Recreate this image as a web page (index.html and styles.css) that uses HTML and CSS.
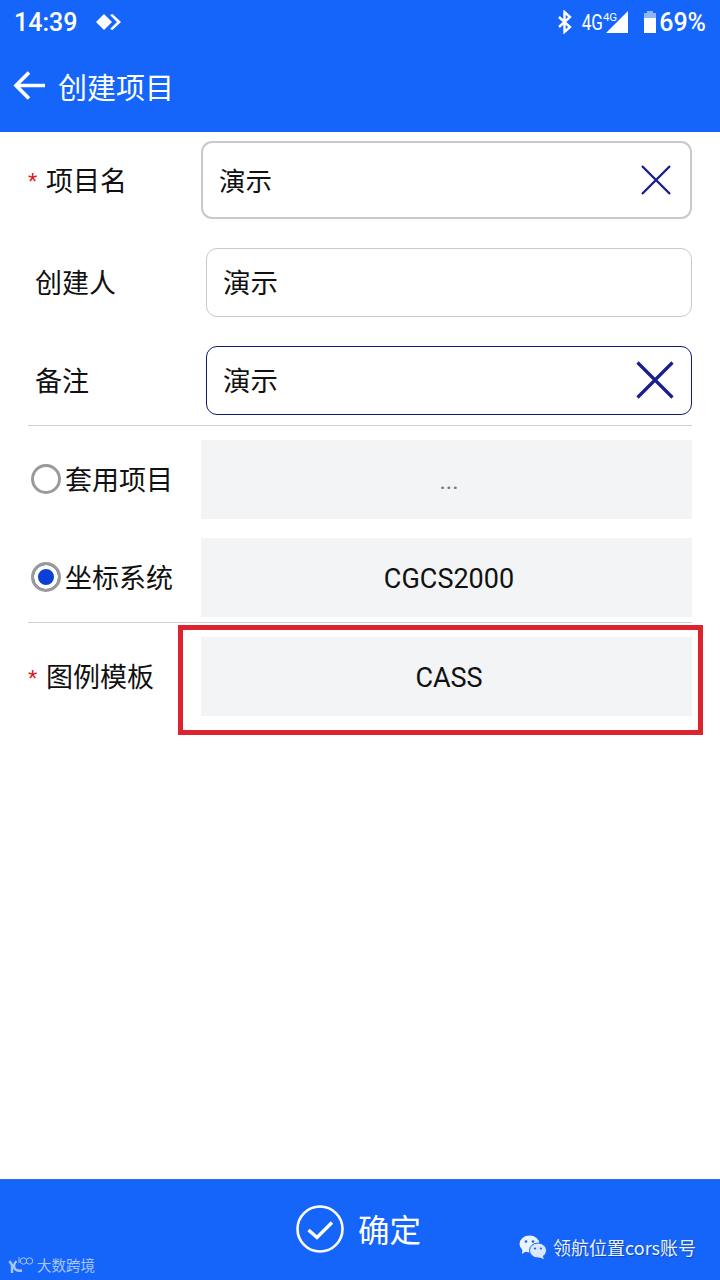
FILE: index.html
```html
<!DOCTYPE html>
<html lang="zh-CN">
<head>
    <meta charset="UTF-8">
    <meta name="viewport" content="width=device-width, initial-scale=1.0">
    <title>创建项目</title>
    <link rel="stylesheet" href="styles.css">
</head>
<body>

<div class="top-bar">
	<div class="status-row">
		<span class="time">14:39</span>
		<svg class="status-diamonds" width="28" height="20" viewBox="0 0 28 20">
			<path d="M1 10 L9 2 L17 10 L9 18 Z" fill="white"/>
			<path d="M15 3 L22 10 L15 17 L17.5 18 L26 10 L17.5 2 Z" fill="white"/>
		</svg>
		<div class="status-right">
			<svg width="16" height="24" viewBox="0 0 16 24">
				<path d="M2 7 L13 17 L7.5 22 V2 L13 7 L2 17" fill="none" stroke="white" stroke-width="2.4"/>
			</svg>
			<span class="net">4G</span>
			<span class="net-small">4G</span>
			<svg class="signal" width="22" height="22" viewBox="0 0 22 22">
				<path d="M0 22 L22 0 V22 Z" fill="white"/>
			</svg>
			<svg class="battery" width="14" height="24" viewBox="0 0 14 24">
				<path d="M4 1 H10 V3 H4 Z" fill="#8fb6fb"/>
				<path d="M1 3 H13 V8 H1 Z" fill="#8fb6fb"/>
				<path d="M1 8 H13 V23 H1 Z" fill="white"/>
			</svg>
			<span class="battery-text">69%</span>
		</div>
	</div>
	<div class="title-row">
		<svg class="back-icon" width="34" height="32" viewBox="0 0 34 32">
			<path d="M32 15.5 H4 M16 2.5 L3 15.5 L16 28.5" fill="none" stroke="white" stroke-width="3.6"/>
		</svg>
		<h1 class="page-title">创建项目</h1>
	</div>
</div>

<div class="form">
	<div class="row row-name">
		<div class="label"><span class="star">*</span>项目名</div>
		<div class="input input-strong">
			<span>演示</span>
			<svg class="clear clear-small" width="32" height="32" viewBox="0 0 32 32">
				<path d="M2 2 L30 30 M30 2 L2 30" stroke="#1a1f8c" stroke-width="2.4"/>
			</svg>
		</div>
	</div>

	<div class="row row-plain">
		<div class="label label-plain">创建人</div>
		<div class="input input-wide"><span>演示</span></div>
	</div>

	<div class="row row-plain">
		<div class="label label-plain">备注</div>
		<div class="input input-wide input-focus">
			<span>演示</span>
			<svg class="clear" width="38" height="38" viewBox="0 0 38 38">
				<path d="M1.5 1.5 L36.5 36.5 M36.5 1.5 L1.5 36.5" stroke="#1a1f8c" stroke-width="3.2"/>
			</svg>
		</div>
	</div>

	<div class="divider divider-first"></div>

	<div class="row row-select">
		<div class="label label-radio"><span class="radio"></span>套用项目</div>
		<div class="select select-dots">...</div>
	</div>

	<div class="row row-select row-second">
		<div class="label label-radio"><span class="radio radio-on"></span>坐标系统</div>
		<div class="select">CGCS2000</div>
	</div>

	<div class="divider divider-second"></div>

	<div class="row row-select row-legend">
		<div class="label"><span class="star">*</span>图例模板</div>
		<div class="select">CASS</div>
		<div class="highlight"></div>
	</div>
</div>

<div class="bottom-bar">
	<svg class="ok-icon" width="48" height="48" viewBox="0 0 48 48">
		<circle cx="24" cy="24" r="22.5" fill="none" stroke="white" stroke-width="2.6"/>
		<path d="M12.5 25 L21 32.5 L36 17.5" fill="none" stroke="white" stroke-width="3.4"/>
	</svg>
	<span class="ok-text">确定</span>

	<div class="mark-left">
		<svg width="26" height="18" viewBox="0 0 26 18">
			<path d="M1.5 5 L4 9 V17 M8.5 5 C4.5 9 5 16 14 14.5" fill="none" stroke="#a8c6fb" stroke-width="2.4"/>
			<path d="M11 1 V7" fill="none" stroke="#a8c6fb" stroke-width="1"/>
			<circle cx="15.5" cy="5" r="3.2" fill="none" stroke="#a8c6fb" stroke-width="1"/>
			<circle cx="21.5" cy="5" r="3.2" fill="none" stroke="#a8c6fb" stroke-width="1"/>
		</svg>
		<span>大数跨境</span>
	</div>

	<div class="mark-right">
		<svg width="28" height="24" viewBox="0 0 28 24">
			<ellipse cx="10.5" cy="9" rx="10" ry="8.5" fill="#eaf1ff"/>
			<path d="M3.5 13 L3 19 L9 15 Z" fill="#eaf1ff"/>
			<ellipse cx="19" cy="15.5" rx="8.5" ry="7.5" fill="#dce8ff" stroke="#1565fb" stroke-width="1"/>
			<path d="M23 20 L25 24 L19 22 Z" fill="#dce8ff"/>
			<circle cx="7" cy="6.5" r="1.3" fill="#1565fb"/>
			<circle cx="14" cy="6.5" r="1.3" fill="#1565fb"/>
			<circle cx="16" cy="13.5" r="1.1" fill="#1565fb"/>
			<circle cx="22" cy="13.5" r="1.1" fill="#1565fb"/>
		</svg>
		<span>领航位置cors账号</span>
	</div>
</div>

</body>
</html>
```
FILE: styles.css
```css
*{
	padding: 0;
	margin: 0;
	box-sizing: border-box;
}

body{
	width: 720px;
	height: 1280px;
	display: flex;
	flex-direction: column;
	background-color: white;
	color: #111;
	font-family: Roboto, "Noto Sans CJK SC", sans-serif;
	overflow: hidden;
}

/* top bar */
.top-bar{
	height: 132px;
	background-color: #1565fb;
	color: white;
	flex-shrink: 0;
}

.status-row{
	height: 44px;
	padding: 0 14px;
	display: flex;
	align-items: center;
}

.time{
	font-size: 25px;
	font-weight: 500;
}

.status-diamonds{
	margin-left: 18px;
}

.status-right{
	margin-left: auto;
	display: flex;
	align-items: center;
}

.net{
	font-size: 17px;
	margin-left: 9px;
	transform: scaleY(1.25);
}

.net-small{
	font-size: 11.5px;
	margin-bottom: 10px;
}

.signal{
	margin-left: -11px;
}

.battery{
	margin-left: 15px;
}

.battery-text{
	font-size: 25px;
	font-weight: 500;
	margin-left: 2px;
}

.title-row{
	height: 88px;
	padding: 0 0 4px 13px;
	display: flex;
	align-items: center;
}

.page-title{
	font-size: 29px;
	font-weight: 400;
	margin-left: 11px;
	font-family: "Noto Sans CJK SC", sans-serif;
}

/* form */
.form{
	flex: 1;
	padding: 9px 28px 0;
}

.row{
	display: flex;
	align-items: center;
}

.row-name{
	height: 78px;
}

.row-plain{
	height: 69px;
	margin-top: 29px;
}

.row-select{
	height: 79px;
	position: relative;
}

.row-second{
	margin-top: 19px;
}

.label{
	width: 173px;
	flex-shrink: 0;
	padding-bottom: 2px;
	font-family: "Noto Sans CJK SC", sans-serif;
	font-size: 27px;
	display: flex;
	align-items: center;
}

.label-plain{
	width: 178px;
	padding-left: 7px;
}

.label-radio{
	padding-left: 3px;
}

.star{
	width: 18px;
	color: #e0141e;
	font-size: 24px;
	font-family: "Liberation Sans", sans-serif;
	line-height: 1;
	padding-top: 6px;
}

.input{
	flex: 1;
	height: 100%;
	padding: 0 18px 2px 16px;
	border: 2px solid #c9c9c9;
	border-radius: 11px;
	display: flex;
	align-items: center;
	justify-content: space-between;
	font-family: "Noto Sans CJK SC", sans-serif;
	font-size: 26.5px;
}

.input-wide{
	padding: 0 17px 3px 16px;
	border-width: 1px;
	font-size: 27.5px;
}

.input-focus{
	border-color: #101a70;
}

.clear{
	margin-top: 2px;
}

.divider{
	height: 1px;
	background-color: #cfcfcf;
}

.divider-first{
	margin-top: 10px;
	margin-bottom: 14px;
}

.divider-second{
	margin-top: 5px;
	margin-bottom: 14px;
}

.select{
	flex: 1;
	height: 100%;
	padding: 2px 0 0 5px;
	background-color: #f2f4f5;
	display: flex;
	align-items: center;
	justify-content: center;
	font-size: 27px;
}

.select-dots{
	color: #777;
	font-size: 24px;
}

.radio{
	width: 30px;
	height: 30px;
	border: 3px solid #9a9a9a;
	border-radius: 50%;
	background-color: white;
	margin-right: 4px;
	flex-shrink: 0;
}

.radio-on{
	background-color: #0b3fd6;
	box-shadow: inset 0 0 0 4px white;
}

.highlight{
	position: absolute;
	left: 150px;
	top: -12px;
	width: 525px;
	height: 110px;
	border: 5px solid #dc2430;
}

/* bottom bar */
.bottom-bar{
	height: 101px;
	flex-shrink: 0;
	background-color: #1565fb;
	border-top: 1px solid #2f6cd8;
	position: relative;
	display: flex;
	align-items: center;
	padding: 0 0 3px 296px;
	color: white;
}

.ok-text{
	font-family: "Noto Sans CJK SC", sans-serif;
	font-size: 31.5px;
	margin-left: 14px;
	padding-bottom: 2px;
}

.mark-left{
	position: absolute;
	left: 8px;
	bottom: 5px;
	display: flex;
	align-items: center;
	gap: 3px;
	font-family: "Noto Sans CJK SC", sans-serif;
	font-size: 14.5px;
	color: #a8c6fb;
}

.mark-right{
	position: absolute;
	left: 519px;
	bottom: 20px;
	display: flex;
	align-items: center;
	gap: 6px;
	font-family: "Noto Sans CJK SC", sans-serif;
	font-size: 18px;
	color: #eaf1ff;
	text-shadow: 1px 1px 1px rgba(0, 0, 0, 0.3);
}
```
